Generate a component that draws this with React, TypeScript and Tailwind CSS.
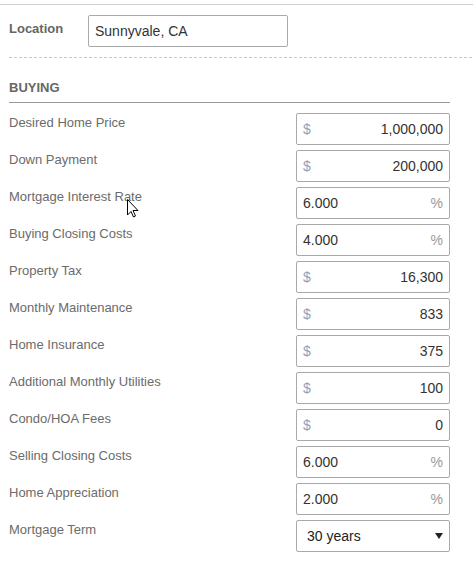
import React from "react";

type Row = { label: string; kind: "$" | "%" | "select"; value: string };

const rows: Row[] = [
  { label: "Desired Home Price", kind: "$", value: "1,000,000" },
  { label: "Down Payment", kind: "$", value: "200,000" },
  { label: "Mortgage Interest Rate", kind: "%", value: "6.000" },
  { label: "Buying Closing Costs", kind: "%", value: "4.000" },
  { label: "Property Tax", kind: "$", value: "16,300" },
  { label: "Monthly Maintenance", kind: "$", value: "833" },
  { label: "Home Insurance", kind: "$", value: "375" },
  { label: "Additional Monthly Utilities", kind: "$", value: "100" },
  { label: "Condo/HOA Fees", kind: "$", value: "0" },
  { label: "Selling Closing Costs", kind: "%", value: "6.000" },
  { label: "Home Appreciation", kind: "%", value: "2.000" },
  { label: "Mortgage Term", kind: "select", value: "30 years" },
];

function Field({ row }: { row: Row }) {
  if (row.kind === "$") {
    return (
      <div className="w-[154px] h-[32px] border border-[#a9a9a9] rounded-[2px] flex items-center justify-between px-[6px] text-[14px]">
        <span className="text-[#8fa1b8]">$</span>
        <span className="text-[#333]">{row.value}</span>
      </div>
    );
  }
  if (row.kind === "%") {
    return (
      <div className="w-[154px] h-[32px] border border-[#a9a9a9] rounded-[2px] flex items-center justify-between px-[6px] text-[14px]">
        <span className="text-[#333]">{row.value}</span>
        <span className="text-[#999]">%</span>
      </div>
    );
  }
  return (
    <div className="w-[154px] h-[32px] border border-[#a9a9a9] rounded-[2px] flex items-center justify-between pl-[10px] pr-[6px] text-[14px]">
      <span className="text-[#222]">{row.value}</span>
      <svg width="8" height="6" viewBox="0 0 8 6">
        <polygon points="0,0 8,0 4,6" fill="#222" />
      </svg>
    </div>
  );
}

export default function App() {
  return (
    <div className="relative w-[473px] h-[565px] bg-white font-['Liberation_Sans',Arial,sans-serif] pt-[4px]">
      <div className="border-t border-[#cfcfcf]" />
      <div className="pl-[9px] pt-[10px] flex items-start">
        <div className="w-[79px] mt-[6px] text-[13px] leading-[15px] font-bold text-[#666]">Location</div>
        <div className="w-[200px] h-[32px] border border-[#a9a9a9] rounded-[2px] flex items-center px-[6px] text-[14px] text-[#333]">
          Sunnyvale, CA
        </div>
      </div>
      <div className="ml-[9px] mt-[10px] h-px bg-[repeating-linear-gradient(90deg,#c8c8c8_0_3px,transparent_3px_5px)]" />
      <div className="ml-[9px] w-[441px] mt-[22px] pb-[7px] border-b border-[#999] text-[13px] leading-[15px] font-bold text-[#666]">
        BUYING
      </div>
      <div className="pl-[9px] w-[450px] mt-[10px] flex flex-col gap-[5px]">
        {rows.map((r) => (
          <div key={r.label} className="flex items-start justify-between">
            <div className="mt-[2px] text-[13px] leading-[15px] text-[#6b6b6b]">{r.label}</div>
            <Field row={r} />
          </div>
        ))}
      </div>
      <svg
        className="absolute left-[127px] top-[199px]"
        width="12"
        height="19"
        viewBox="0 0 12 19"
      >
        <path
          d="M0.5 0.5 L0.5 16 L4 12.5 L6.5 18 L8.5 17 L6 11.5 L11 11.5 Z"
          fill="#fff"
          stroke="#000"
          strokeWidth="1"
          strokeLinejoin="miter"
        />
      </svg>
    </div>
  );
}
